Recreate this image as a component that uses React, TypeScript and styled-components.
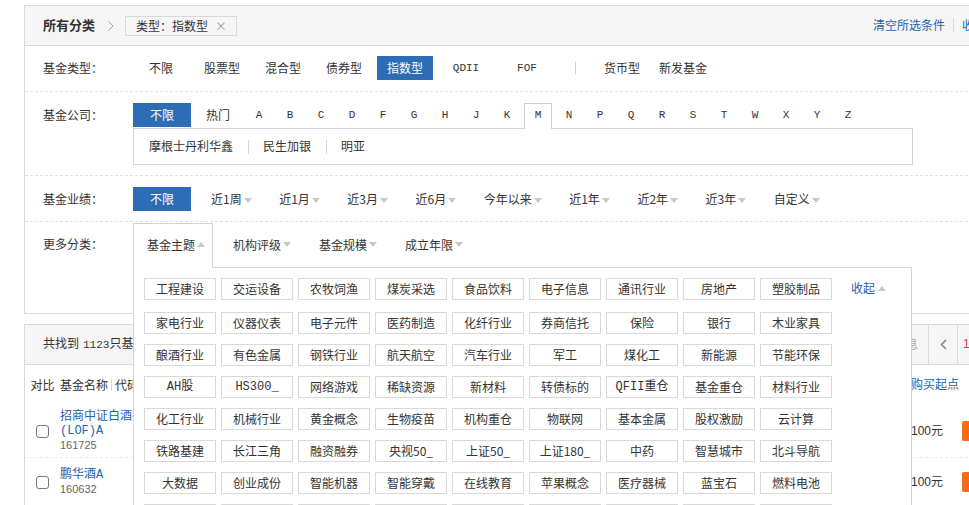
import React from "react";
import styled, { createGlobalStyle } from "styled-components";

const BLUE = "#2c6db6";
const LINK = "#2463ad";
const BORDER = "#dadada";
const CJK = `"Noto Sans CJK SC", sans-serif`;
const MONO = `"Liberation Mono", "Noto Sans CJK SC", monospace`;
const NUM = `"Liberation Sans", "Noto Sans CJK SC", sans-serif`;

const Global = createGlobalStyle`
  html, body { margin: 0; padding: 0; overflow: hidden; background: #fff; }
  body { font-family: ${CJK}; font-size: 12px; color: #333; line-height: 1.4; }
  * { box-sizing: border-box; }
`;

const Page = styled.div`
  padding: 5px 0 0 24px;
  width: 1100px;
`;

/* ---------- filter panel ---------- */
const FilterPanel = styled.section`
  width: 1000px;
  border: 1px solid ${BORDER};
`;

const PanelHeader = styled.div`
  display: flex;
  align-items: center;
  height: 40px;
  padding: 0 13px 0 18px;
  background: #f6f6f6;
  border-bottom: 1px solid ${BORDER};
`;

const Crumb = styled.strong`
  font-size: 13px;
  font-weight: bold;
  color: #333;
`;

const CrumbArrow = styled.svg`
  margin: 0 11px 0 13px;
`;

const CrumbTag = styled.span`
  display: flex;
  align-items: center;
  height: 20px;
  padding: 0 9px 0 10px;
  border: 1px solid #d8d8d8;
  line-height: 18px;
`;

const CrumbClose = styled.span`
  margin-left: 7px;
  color: #9a9a9a;
  font-size: 12px;
`;

const HeaderLinks = styled.div`
  display: flex;
  align-items: center;
  margin-left: auto;
`;

const TextLink = styled.a`
  color: ${LINK};
  text-decoration: none;
  cursor: pointer;
`;

const VSep = styled.span<{ $h?: number; $mx?: string }>`
  display: inline-block;
  width: 1px;
  height: ${(p) => p.$h ?? 14}px;
  background: #d6d6d6;
  margin: ${(p) => p.$mx ?? "0 8px"};
`;

const FilterRow = styled.div<{ $pad: string; $last?: boolean }>`
  display: flex;
  align-items: flex-start;
  padding: ${(p) => p.$pad};
  border-bottom: ${(p) => (p.$last ? "none" : "1px dashed #e2e2e2")};
`;

const Label = styled.div<{ $offset?: number }>`
  width: 90px;
  flex-shrink: 0;
  line-height: 24px;
  margin-top: ${(p) => p.$offset ?? 0}px;
  color: #333;
`;

const Options = styled.div`
  display: flex;
  align-items: center;
`;

const TypeOption = styled.span<{ $active?: boolean; $mono?: boolean }>`
  width: 56px;
  height: 24px;
  line-height: 24px;
  margin-right: 5px;
  text-align: center;
  cursor: pointer;
  background: ${(p) => (p.$active ? BLUE : "transparent")};
  color: ${(p) => (p.$active ? "#fff" : "#333")};
  font-family: ${(p) => (p.$mono ? MONO : CJK)};
  font-size: ${(p) => (p.$mono ? "11px" : "12px")};
`;

const TypeSep = styled.span`
  width: 31px;
  height: 24px;
  margin-right: 3px;
  display: flex;
  align-items: center;
  justify-content: center;
  &::before {
    content: "";
    width: 1px;
    height: 12px;
    background: #d2d2d2;
  }
`;

const CompanyBlock = styled.div`
  display: flex;
  flex-direction: column;
`;

const LetterBar = styled.div`
  display: flex;
  align-items: flex-start;
  height: 25px;
`;

const BlockOption = styled.span<{ $w: number; $active?: boolean }>`
  width: ${(p) => p.$w}px;
  height: 24px;
  line-height: 24px;
  text-align: center;
  cursor: pointer;
  background: ${(p) => (p.$active ? BLUE : "transparent")};
  color: ${(p) => (p.$active ? "#fff" : "#333")};
`;

const Letter = styled.span<{ $active?: boolean }>`
  width: 28px;
  margin-right: 3px;
  height: ${(p) => (p.$active ? 26 : 25)}px;
  line-height: 23px;
  text-align: center;
  font-family: ${MONO};
  font-size: 11px;
  cursor: pointer;
  background: #fff;
  border: 1px solid ${(p) => (p.$active ? "#cfcfcf" : "transparent")};
  border-bottom: none;
  position: ${(p) => (p.$active ? "relative" : "static")};
  z-index: 1;
`;

const CompanyBox = styled.div`
  width: 780px;
  height: 37px;
  display: flex;
  align-items: center;
  padding-left: 15px;
  border: 1px solid #d4d4d4;
  background: #fff;
`;

const CompanyItem = styled.span`
  color: #333;
  cursor: pointer;
`;

const PerfItem = styled.span`
  display: inline-flex;
  align-items: center;
  height: 24px;
  line-height: 24px;
  padding: 0 7.5px 0 20px;
  cursor: pointer;
`;

const Caret = styled.i<{ $up?: boolean }>`
  display: inline-block;
  width: 0;
  height: 0;
  margin: 2px 0 0 2px;
  border-left: 4px solid transparent;
  border-right: 4px solid transparent;
  ${(p) => (p.$up ? "border-bottom: 5px solid #c9c9c9;" : "border-top: 5px solid #c9c9c9;")}
`;

const TabBar = styled.div`
  position: relative;
  display: flex;
`;

const Tab = styled.span<{ $active?: boolean }>`
  display: flex;
  align-items: flex-start;
  height: 45px;
  line-height: 41px;
  padding: 0 7px 0 13px;
  margin-right: 6px;
  cursor: pointer;
  border: 1px solid ${(p) => (p.$active ? "#d4d4d4" : "transparent")};
  border-bottom: none;
  background: ${(p) => (p.$active ? "#fff" : "transparent")};
  position: relative;
  z-index: ${(p) => (p.$active ? 3 : 0)};
  & > i {
    margin-top: 18px;
  }
`;

const Popup = styled.div`
  position: absolute;
  top: 44px;
  left: 0;
  width: 779px;
  padding: 10px 0 0 10px;
  background: #fff;
  border: 1px solid #d4d4d4;
  z-index: 2;
`;

const TagWrap = styled.div`
  display: flex;
  flex-wrap: wrap;
  align-items: flex-start;
  width: 750px;
`;

const Tag = styled.span<{ $mono?: boolean }>`
  width: 72px;
  height: 22px;
  line-height: 20px;
  margin: 0 5px 10px 0;
  text-align: center;
  border: 1px solid #d9d9d9;
  color: #333;
  cursor: pointer;
  font-family: ${(p) => (p.$mono ? MONO : CJK)};
  font-size: 12px;
  white-space: nowrap;
`;

const Collapse = styled.a`
  display: inline-flex;
  align-items: center;
  height: 24px;
  line-height: 20px;
  padding-bottom: 4px;
  margin: 0 0 10px 14px;
  color: ${LINK};
  cursor: pointer;
  & > i {
    margin: 0 0 0 3px;
  }
`;

/* ---------- result panel ---------- */
const ResultPanel = styled.section`
  width: 1000px;
  margin-top: 10px;
  border: 1px solid ${BORDER};
  border-bottom: none;
`;

const ResultHeader = styled.div`
  display: flex;
  align-items: center;
  height: 40px;
  background: #f6f6f6;
  border-bottom: 1px solid ${BORDER};
`;

const Summary = styled.div`
  flex: 1;
  padding-left: 18px;
  color: #333;
`;

const Mono = styled.span`
  font-family: ${MONO};
  font-size: 11px;
  margin-left: 4px;
`;

const InfoText = styled.span`
  padding-right: 10px;
  color: #aaa;
`;

const Pager = styled.div`
  display: flex;
  align-self: stretch;
  width: 95px;
`;

const PrevBtn = styled.span`
  width: 30px;
  display: flex;
  align-items: center;
  justify-content: center;
  border-left: 1px solid ${BORDER};
  border-right: 1px solid ${BORDER};
`;

const PageNum = styled.span`
  display: flex;
  align-items: center;
  padding-left: 5px;
  color: #e4393c;
  font-family: ${NUM};
  font-size: 12px;
`;

const PageTotal = styled.span`
  color: #999;
  margin-left: 2px;
`;

const TableRow = styled.div<{ $head?: boolean }>`
  display: flex;
  align-items: center;
  min-height: ${(p) => (p.$head ? 40 : 49)}px;
  padding: ${(p) => (p.$head ? "0" : "5px 0")};
  border-bottom: ${(p) => (p.$head ? "none" : "1px dashed #ececec")};
`;

const CheckCol = styled.div`
  width: 35px;
  flex-shrink: 0;
  display: flex;
  justify-content: center;
`;

const Checkbox = styled.span`
  width: 13px;
  height: 13px;
  border: 1px solid #7a7a7a;
  border-radius: 3px;
  background: #fff;
`;

const NameCol = styled.div<{ $nowrap?: boolean }>`
  width: 100px;
  flex-shrink: 0;
  line-height: 14px;
  white-space: ${(p) => (p.$nowrap ? "nowrap" : "normal")};
  display: flex;
  align-items: center;
`;

const NameBlock = styled.div`
  width: 100px;
`;

const FundName = styled.a`
  display: block;
  color: ${LINK};
  font-family: ${MONO};
  font-size: 12px;
  cursor: pointer;
`;

const FundCode = styled.span`
  display: block;
  color: #666;
  font-family: ${NUM};
  font-size: 11px;
`;

const Spacer = styled.div`
  flex: 1;
`;

const BuyCol = styled.div`
  width: 52px;
  flex-shrink: 0;
  padding-left: 1px;
  font-family: ${NUM};
  font-size: 12px;
  white-space: nowrap;
`;

const ActCol = styled.div`
  width: 61px;
  flex-shrink: 0;
`;

const BuyBtn = styled.span`
  display: inline-block;
  width: 50px;
  height: 20px;
  line-height: 20px;
  border-radius: 2px;
  background: #f36c1c;
  color: #fff;
  text-align: center;
`;

/* ---------- data ---------- */
const fundTypes: { t: string; sep?: boolean; mono?: boolean; active?: boolean }[] = [
  { t: "不限" },
  { t: "股票型" },
  { t: "混合型" },
  { t: "债券型" },
  { t: "指数型", active: true },
  { t: "QDII", mono: true },
  { t: "FOF", mono: true },
  { t: "|", sep: true },
  { t: "货币型" },
  { t: "新发基金" },
];

const letters = ["A", "B", "C", "D", "F", "G", "H", "J", "K", "M", "N", "P", "Q", "R", "S", "T", "W", "X", "Y", "Z"];
const companies = ["摩根士丹利华鑫", "民生加银", "明亚"];
const perf = ["近1周", "近1月", "近3月", "近6月", "今年以来", "近1年", "近2年", "近3年", "自定义"];
const tabs = ["基金主题", "机构评级", "基金规模", "成立年限"];

const tagRows = [
  ["工程建设", "交运设备", "农牧饲渔", "煤炭采选", "食品饮料", "电子信息", "通讯行业", "房地产", "塑胶制品"],
  ["家电行业", "仪器仪表", "电子元件", "医药制造", "化纤行业", "券商信托", "保险", "银行", "木业家具"],
  ["酿酒行业", "有色金属", "钢铁行业", "航天航空", "汽车行业", "军工", "煤化工", "新能源", "节能环保"],
  ["AH股", "HS300_", "网络游戏", "稀缺资源", "新材料", "转债标的", "QFII重仓", "基金重仓", "材料行业"],
  ["化工行业", "机械行业", "黄金概念", "生物疫苗", "机构重仓", "物联网", "基本金属", "股权激励", "云计算"],
  ["铁路基建", "长江三角", "融资融券", "央视50_", "上证50_", "上证180_", "中药", "智慧城市", "北斗导航"],
  ["大数据", "创业成份", "智能机器", "智能穿戴", "在线教育", "苹果概念", "医疗器械", "蓝宝石", "燃料电池"],
  ["移动支付", "网络安全", "充电桩", "在线旅游", "量子通信", "人工智能", "无人驾驶", "区块链", "养老概念"],
];

const funds = [
  { name: "招商中证白酒指数(LOF)A", code: "161725", min: "100元" },
  { name: "鹏华酒A", code: "160632", min: "100元" },
];

const hasLatin = (s: string) => /[A-Za-z]/.test(s);

export default function App() {
  return (
    <>
      <Global />
      <Page>
        <FilterPanel>
          <PanelHeader>
            <Crumb>所有分类</Crumb>
            <CrumbArrow width="6" height="10" viewBox="0 0 6 10">
              <polyline points="0.5,0.5 5,5 0.5,9.5" fill="none" stroke="#a0a0a0" strokeWidth="1" />
            </CrumbArrow>
            <CrumbTag>
              类型：指数型<CrumbClose>×</CrumbClose>
            </CrumbTag>
            <HeaderLinks>
              <TextLink>清空所选条件</TextLink>
              <VSep />
              <TextLink>收起筛选</TextLink>
            </HeaderLinks>
          </PanelHeader>

          <FilterRow $pad="10px 0 11px 18px">
            <Label>基金类型：</Label>
            <Options>
              {fundTypes.map((o, i) =>
                o.sep ? (
                  <TypeSep key={i} />
                ) : (
                  <TypeOption key={i} $active={o.active} $mono={o.mono}>
                    {o.t}
                  </TypeOption>
                )
              )}
            </Options>
          </FilterRow>

          <FilterRow $pad="11px 0 10px 18px">
            <Label>基金公司：</Label>
            <CompanyBlock>
              <LetterBar>
                <BlockOption $w={58} $active>
                  不限
                </BlockOption>
                <BlockOption $w={54}>热门</BlockOption>
                {letters.map((l) => (
                  <Letter key={l} $active={l === "M"}>
                    {l}
                  </Letter>
                ))}
              </LetterBar>
              <CompanyBox>
                {companies.map((c, i) => (
                  <React.Fragment key={c}>
                    {i > 0 && <VSep $h={14} $mx="0 14px 0 15px" />}
                    <CompanyItem>{c}</CompanyItem>
                  </React.Fragment>
                ))}
              </CompanyBox>
            </CompanyBlock>
          </FilterRow>

          <FilterRow $pad="11px 0 10px 18px">
            <Label>基金业绩：</Label>
            <Options>
              <BlockOption $w={58} $active>
                不限
              </BlockOption>
              {perf.map((p) => (
                <PerfItem key={p}>
                  {p}
                  <Caret />
                </PerfItem>
              ))}
            </Options>
          </FilterRow>

          <FilterRow $pad="1px 0 45px 18px" $last>
            <Label $offset={9}>更多分类：</Label>
            <TabBar>
              {tabs.map((t, i) => (
                <Tab key={t} $active={i === 0}>
                  {t}
                  <Caret $up={i === 0} />
                </Tab>
              ))}
              <Popup>
                <TagWrap>
                  {tagRows.map((row, ri) => (
                    <React.Fragment key={ri}>
                      {row.map((t) => (
                        <Tag key={t} $mono={hasLatin(t)}>
                          {t}
                        </Tag>
                      ))}
                      {ri === 0 && (
                        <Collapse>
                          收起
                          <Caret $up />
                        </Collapse>
                      )}
                    </React.Fragment>
                  ))}
                </TagWrap>
              </Popup>
            </TabBar>
          </FilterRow>
        </FilterPanel>

        <ResultPanel>
          <ResultHeader>
            <Summary>
              共找到<Mono>1123</Mono>只基金
            </Summary>
            <InfoText>只显示可购信息</InfoText>
            <Pager>
              <PrevBtn>
                <svg width="7" height="11" viewBox="0 0 7 11">
                  <polyline points="6,1 1.5,5.5 6,10" fill="none" stroke="#888" strokeWidth="1.6" />
                </svg>
              </PrevBtn>
              <PageNum>
                1<PageTotal>/57</PageTotal>
              </PageNum>
            </Pager>
          </ResultHeader>

          <TableRow $head>
            <CheckCol>对比</CheckCol>
            <NameCol $nowrap>
              基金名称
              <VSep $h={12} $mx="0 3px" />
              代码
            </NameCol>
            <Spacer />
            <BuyCol>
              <TextLink>购买起点</TextLink>
            </BuyCol>
            <ActCol />
          </TableRow>

          {funds.map((f) => (
            <TableRow key={f.code}>
              <CheckCol>
                <Checkbox />
              </CheckCol>
              <NameCol>
                <NameBlock>
                  <FundName>{f.name}</FundName>
                  <FundCode>{f.code}</FundCode>
                </NameBlock>
              </NameCol>
              <Spacer />
              <BuyCol>{f.min}</BuyCol>
              <ActCol>
                <BuyBtn>购买</BuyBtn>
              </ActCol>
            </TableRow>
          ))}
        </ResultPanel>
      </Page>
    </>
  );
}
